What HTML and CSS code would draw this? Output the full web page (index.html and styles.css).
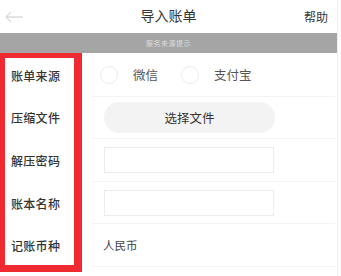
FILE: index.html
```html
<!DOCTYPE html>
<html lang="zh">
<head>
<meta charset="utf-8">
<link rel="stylesheet" href="styles.css">
</head>
<body>
<div class="page">
  <header class="topbar">
    <svg class="back" width="20" height="12" viewBox="0 0 20 12"><path d="M19 6H2M7 1L2 6l5 5" fill="none" stroke="#dcdcdc" stroke-width="1.3"/></svg>
    <div class="title">导入账单</div>
    <div class="help">帮助</div>
  </header>
  <div class="notice">服务来源提示</div>
  <div class="form">
    <div class="row">
      <div class="label">账单来源</div>
      <div class="field radios">
        <span class="radio"></span><span class="rtext">微信</span>
        <span class="radio r2"></span><span class="rtext">支付宝</span>
      </div>
    </div>
    <div class="row">
      <div class="label">压缩文件</div>
      <div class="field"><div class="btn">选择文件</div></div>
    </div>
    <div class="row">
      <div class="label">解压密码</div>
      <div class="field"><div class="input"></div></div>
    </div>
    <div class="row">
      <div class="label">账本名称</div>
      <div class="field"><div class="input"></div></div>
    </div>
    <div class="row">
      <div class="label">记账币种</div>
      <div class="field"><span class="val">人民币</span></div>
    </div>
    <div class="highlight"></div>
  </div>
</div>
</body>
</html>
```
FILE: styles.css
```css
* { box-sizing: border-box; }
html, body { margin: 0; padding: 0; background: #fff; }
body { font-family: "Noto Sans CJK SC", "Noto Sans", sans-serif; color: #333; }
.page { width: 338px; border-right: 1px solid #f0f0f0; height: 276px; }
.topbar { height: 33px; display: flex; align-items: center; justify-content: space-between; padding: 0 9px 0 4px; position: relative; }
.title { font-size: 14px; color: #333; position: absolute; left: 0; right: 0; text-align: center; top: 5px; pointer-events: none; }
.help { font-size: 12px; color: #333; margin-left: auto; }
.notice { height: 20px; background: #a5a5a5; color: #dedede; font-size: 7px; text-align: center; line-height: 20px; letter-spacing: 0.5px; }
.form { position: relative; padding-top: 1px; }
.row { display: flex; height: 42.6px; align-items: center; }
.label { width: 92px; padding-left: 11px; font-size: 12px; color: #333; font-weight: 500; letter-spacing: 0.3px; }
.field { flex: 1; height: 100%; display: flex; align-items: center; border-bottom: 1px solid #f3f3f3; padding-left: 12px; margin-right: 2px; }
.radios { padding-left: 8px; }
.radio { width: 18px; height: 18px; border: 1px solid #ececec; border-radius: 50%; }
.rtext { font-size: 12.5px; color: #555; margin-left: 15px; }
.rtext + .r2 { margin-left: 23px; }
.btn { width: 171px; height: 31px; border-radius: 16px; background: #f3f3f3; font-size: 12.5px; color: #333; display: flex; align-items: center; justify-content: center; }
.input { width: 170px; height: 26px; border: 1px solid #ececec; }
.val { font-size: 11.5px; color: #444; margin-left: -1px; }
.highlight { position: absolute; left: 0; top: 0; width: 82px; height: 219px; border: 5px solid #ef2a31; border-right-width: 8px; border-bottom-width: 7px; }
```
